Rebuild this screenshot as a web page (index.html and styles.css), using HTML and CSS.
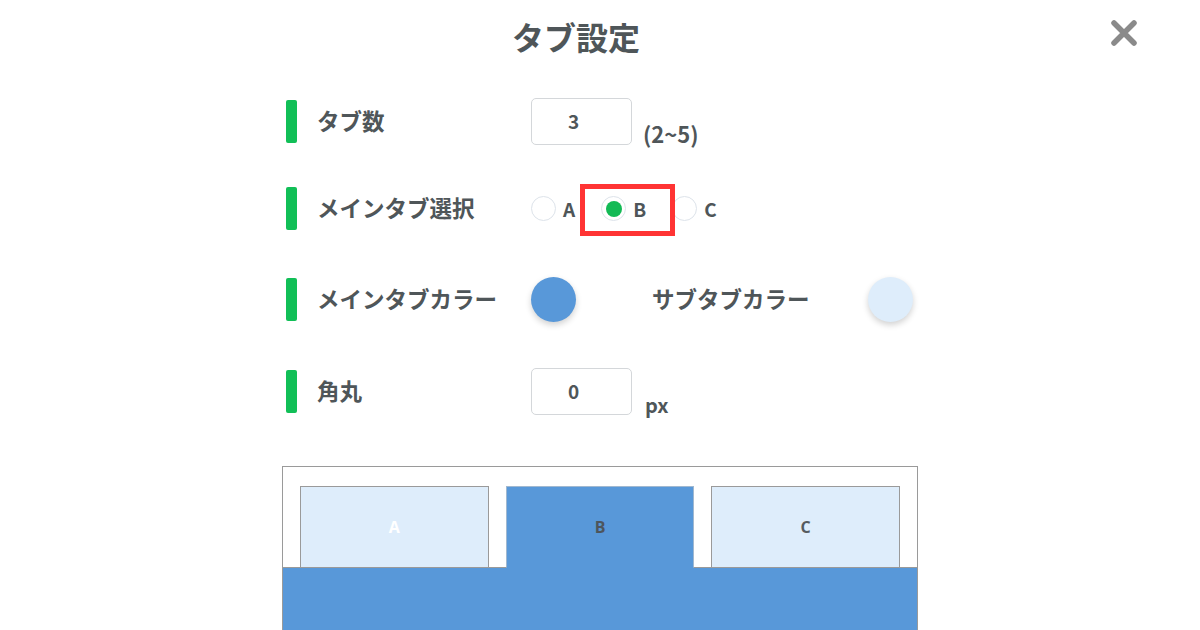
FILE: index.html
```html
<!DOCTYPE html>
<html lang="ja">
<head>
<meta charset="utf-8">
<title>タブ設定</title>
<link rel="stylesheet" href="styles.css">
</head>
<body>
<div class="page">
  <header class="header">
    <div></div>
    <h1 class="title">タブ設定</h1>
    <div class="close-wrap">
      <button class="close" aria-label="閉じる">
        <svg width="26" height="26" viewBox="0 0 26 26"><path d="M3 3L23 23M23 3L3 23" stroke="#8a8a8a" stroke-width="5.5" stroke-linecap="round"/></svg>
      </button>
    </div>
  </header>

  <div class="form">
    <div class="row row1">
      <div class="label"><span class="bar"></span><span class="label-text">タブ数</span></div>
      <div class="control">
        <div class="input">3</div>
        <span class="unit unit-range">(2~5)</span>
      </div>
    </div>

    <div class="row row2">
      <div class="label"><span class="bar"></span><span class="label-text">メインタブ選択</span></div>
      <div class="control radios">
        <label class="radio"><span class="circle"></span><span>A</span></label>
        <label class="radio"><span class="circle checked"><span class="dot"></span></span><span>B</span></label>
        <label class="radio"><span class="circle"></span><span>C</span></label>
        <span class="highlight"></span>
      </div>
    </div>

    <div class="row row3">
      <div class="label"><span class="bar"></span><span class="label-text">メインタブカラー</span></div>
      <div class="control">
        <span class="swatch swatch-main"></span>
        <span class="sub-label">サブタブカラー</span>
        <span class="swatch swatch-sub"></span>
      </div>
    </div>

    <div class="row row4">
      <div class="label"><span class="bar"></span><span class="label-text">角丸</span></div>
      <div class="control">
        <div class="input">0</div>
        <span class="unit unit-px">px</span>
      </div>
    </div>
  </div>

  <div class="preview">
    <div class="tabs">
      <div class="tab tab-a">A</div>
      <div class="tab tab-active">B</div>
      <div class="tab">C</div>
    </div>
    <div class="content"></div>
  </div>
</div>
</body>
</html>
```

FILE: styles.css
```css
* { box-sizing: border-box; }
html, body {
  margin: 0;
  padding: 0;
  background: #ffffff;
  overflow: hidden;
}
body {
  font-family: "Noto Sans CJK JP", "Noto Sans", sans-serif;
  color: #4f5659;
  font-weight: 700;
}
.page {
  width: 1200px;
  height: 630px;
  overflow: hidden;
}
.header {
  display: grid;
  grid-template-columns: 1fr auto 1fr;
  align-items: center;
  height: 71px;
}
.title {
  margin: 0 48px 0 0;
  font-size: 32px;
  line-height: 40px;
  font-weight: 700;
  color: #4f5659;
}
.close-wrap {
  display: flex;
  justify-content: flex-end;
  padding-right: 63px;
  align-self: start;
  padding-top: 20px;
}
.close {
  border: 0;
  background: none;
  padding: 0;
  width: 26px;
  height: 26px;
  display: block;
}
.close svg { display: block; }

.form {
  padding-left: 286px;
  padding-top: 27px;
}
.row {
  display: flex;
  align-items: center;
  height: 47px;
}
.row2 { margin-top: 40px; }
.row3 { margin-top: 44px; }
.row4 { margin-top: 45px; }
.label {
  display: flex;
  align-items: center;
  gap: 20px;
  width: 245px;
  font-size: 22.5px;
  line-height: 30px;
}
.label-text {
  padding-bottom: 4px;
}
.bar {
  display: block;
  width: 11px;
  height: 43px;
  border-radius: 2px;
  background: #11bf57;
}
.control {
  display: flex;
  align-items: center;
  height: 47px;
  position: relative;
}
.input {
  width: 101px;
  height: 47px;
  border: 1.5px solid #d4d7da;
  border-radius: 5px;
  display: flex;
  align-items: center;
  justify-content: center;
  font-size: 19px;
  line-height: 1;
  color: #4f5659;
  padding: 0 16px 2px 0;
}
.unit {
  line-height: 24px;
  align-self: flex-end;
}
.unit-range {
  font-size: 22px;
  margin-left: 11px;
  margin-bottom: 0;
}
.unit-px {
  font-size: 20px;
  margin-left: 13px;
  margin-bottom: -2px;
}

.radios { gap: 26px; }
.radio {
  display: flex;
  align-items: center;
  gap: 7px;
  font-size: 19px;
  line-height: 20px;
}
.circle {
  width: 25px;
  height: 25px;
  border-radius: 50%;
  border: 1px solid #dde3ea;
  background: #fff;
  display: flex;
  align-items: center;
  justify-content: center;
}
.dot {
  width: 16px;
  height: 16px;
  border-radius: 50%;
  background: #13ba55;
}
.highlight {
  position: absolute;
  left: 49px;
  top: -1px;
  width: 95px;
  height: 52px;
  border: 5px solid #ff3434;
}

.swatch {
  display: block;
  width: 45px;
  height: 45px;
  border-radius: 50%;
  box-shadow: 0 3px 6px rgba(0, 0, 0, 0.18);
}
.swatch-main { background: #5898d9; }
.swatch-sub { background: #deedfb; margin-left: 58px; }
.sub-label {
  margin-left: 76px;
  font-size: 22.5px;
  line-height: 30px;
  padding-bottom: 4px;
}

.preview {
  margin: 51px 0 0 282px;
  width: 636px;
  border: 1px solid #9a9a9a;
  border-bottom: 0;
  padding: 19px 17px 0;
}
.tabs {
  display: flex;
  gap: 17px;
  margin-bottom: -1px;
  position: relative;
  z-index: 1;
}
.tab {
  flex: 1;
  height: 82px;
  border: 1px solid #9a9a9a;
  background: #deedfb;
  display: flex;
  align-items: center;
  justify-content: center;
  font-family: "Open Sans", "Noto Sans", sans-serif;
  font-size: 16px;
  font-weight: 700;
  color: #555b5f;
}
.tab-a { color: #ffffff; }
.tab-active {
  background: #5898d9;
  border-color: #a0b8d0;
  border-bottom-color: #5898d9;
  color: #4d555c;
}
.content {
  margin: 0 -17px;
  height: 80px;
  background: #5898d9;
  border-top: 1px solid #9a9a9a;
}
```
